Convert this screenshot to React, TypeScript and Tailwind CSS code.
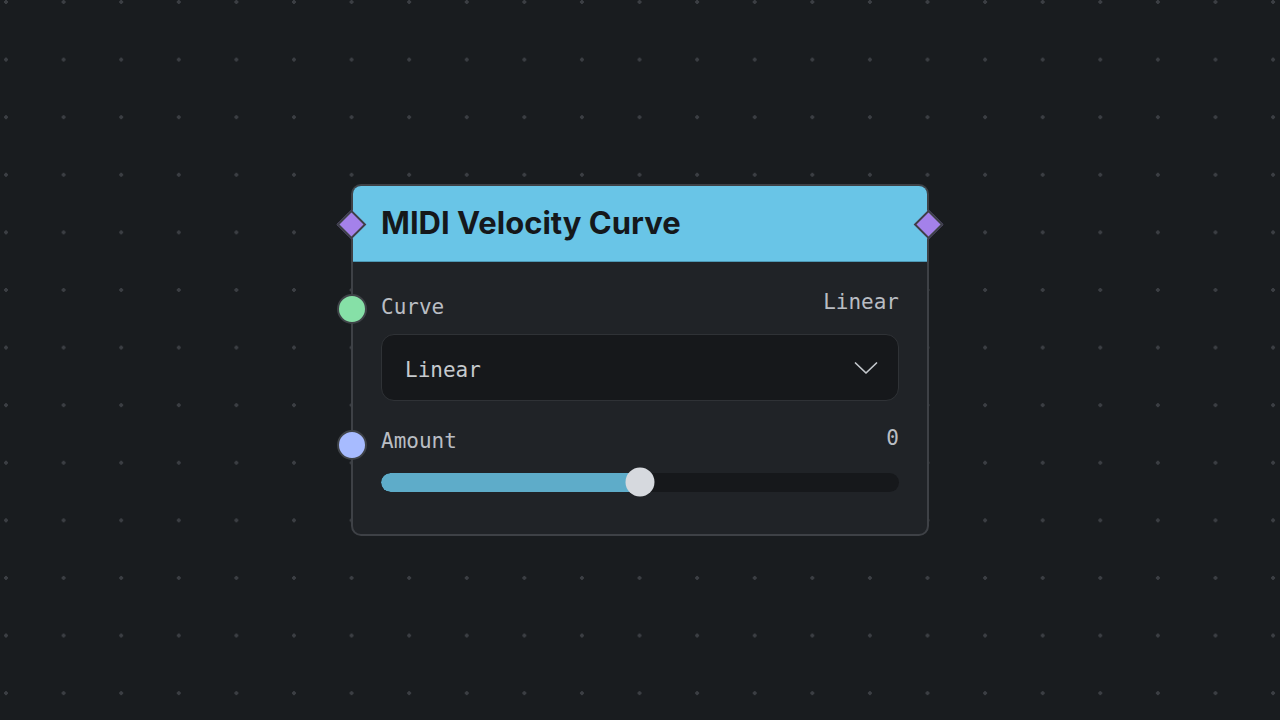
import React from "react";

function Diamond({ side }: { side: "left" | "right" }) {
  return (
    <div
      className={`absolute top-[28px] w-[21px] h-[21px] rotate-45 bg-[#a481ea] border-2 border-[#3d4046] ${
        side === "left" ? "left-[-12px]" : "right-[-12px]"
      }`}
    />
  );
}

function Port({ color }: { color: string }) {
  return (
    <div
      className="absolute left-[-44px] top-[1px] w-[30px] h-[30px] rounded-full border-2 border-[#3f4348]"
      style={{ backgroundColor: color }}
    />
  );
}

export default function App() {
  const mono = { fontFamily: '"DejaVu Sans Mono", "Liberation Mono", monospace' };
  const pct = 50;
  return (
    <div
      className="relative w-[1280px] h-[720px] overflow-hidden bg-[#191c1f]"
      style={{
        backgroundImage: "radial-gradient(circle, #3b3e43 1.6px, transparent 2.1px)",
        backgroundSize: "57.6px 57.6px",
        backgroundPosition: "-22.8px -26.8px",
      }}
    >
      <div className="absolute left-[351px] top-[184px] w-[578px] rounded-[10px] border-2 border-[#3e4146] bg-[#202327]">
        <div className="relative h-[76px] rounded-t-[8px] bg-[#69c5e7] border-b border-[#4d98b5] flex items-center pl-[28px]">
          <span
            className="text-[31px] font-bold text-[#15181b]"
            style={{ fontFamily: "Inter, 'Noto Sans', sans-serif" }}
          >
            MIDI Velocity Curve
          </span>
          <Diamond side="left" />
          <Diamond side="right" />
        </div>
        <div className="px-[28px] pt-[31px] pb-[37px]" style={mono}>
          <div className="relative flex justify-between items-start h-[24px]">
            <Port color="#86e0a7" />
            <span className="text-[21px] leading-[24px] text-[#b9bdc3] pt-[2px]">Curve</span>
            <span className="text-[21px] leading-[24px] text-[#b9bdc3] -mt-[3px]">Linear</span>
          </div>
          <div className="mt-[17px] h-[67px] rounded-[13px] border border-[#2f3236] bg-[#16181b] flex items-center justify-between pl-[23px] pr-[20px]">
            <span className="text-[21px] text-[#c6cace] pt-[6px]">Linear</span>
            <svg width="24" height="14" viewBox="0 0 24 14" fill="none">
              <path d="M1.5 2 L12 12 L22.5 2" stroke="#c3c7cc" strokeWidth="1.7" strokeLinecap="round" strokeLinejoin="round" />
            </svg>
          </div>
          <div className="relative flex justify-between items-start h-[24px] mt-[28px]">
            <Port color="#a7bbff" />
            <span className="text-[21px] leading-[24px] text-[#b9bdc3]">Amount</span>
            <span className="text-[21px] leading-[24px] text-[#b9bdc3] -mt-[3px]">0</span>
          </div>
          <div className="relative mt-[14px] h-[30px] flex items-center">
            <div className="relative w-full h-[19px] rounded-full bg-[#16181b] overflow-hidden">
              <div className="absolute left-0 top-0 h-full rounded-full bg-[#5eacc9]" style={{ width: `${pct}%` }} />
            </div>
            <div
              className="absolute top-1/2 -translate-y-1/2 -translate-x-1/2 w-[29px] h-[29px] rounded-full bg-[#d6d9de]"
              style={{ left: `${pct}%` }}
            />
          </div>
        </div>
      </div>
    </div>
  );
}
